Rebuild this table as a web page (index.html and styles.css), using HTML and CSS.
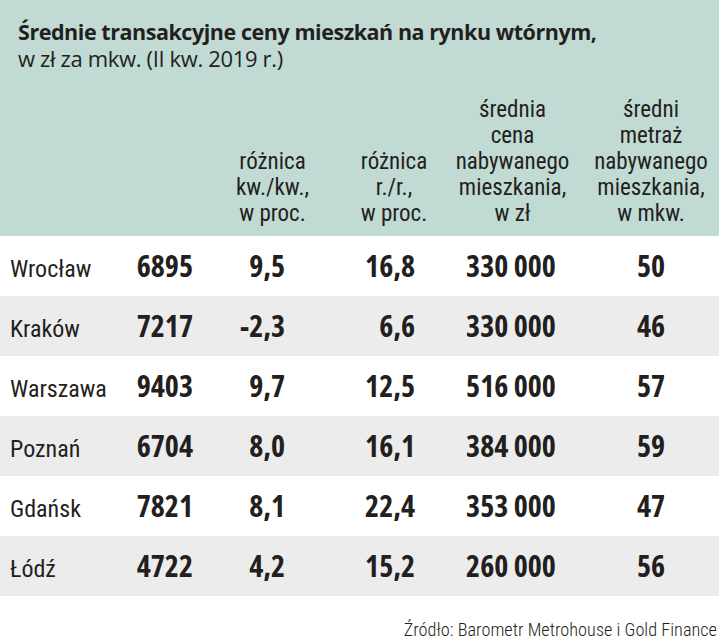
FILE: index.html
```html
<!DOCTYPE html>
<html lang="pl">
<head>
<meta charset="utf-8">
<title>Średnie transakcyjne ceny mieszkań</title>
<link rel="stylesheet" href="styles.css">
</head>
<body>
<div class="chart">
  <header class="head">
    <h1 class="title">Średnie transakcyjne ceny mieszkań na rynku wtórnym,</h1>
    <p class="subtitle">w zł za mkw. (II kw. 2019 r.)</p>
    <div class="grid colhead">
      <div class="c1"></div>
      <div class="c2"></div>
      <div class="c3">różnica<br>kw./kw.,<br>w proc.</div>
      <div class="c4">różnica<br>r./r.,<br>w proc.</div>
      <div class="c5">średnia<br>cena<br>nabywanego<br>mieszkania,<br>w zł</div>
      <div class="c6">średni<br>metraż<br>nabywanego<br>mieszkania,<br>w mkw.</div>
    </div>
  </header>
  <div class="rows">
    <div class="grid row"><div class="c1 city">Wrocław</div><div class="c2 num">6895</div><div class="c3 num">9,5</div><div class="c4 num">16,8</div><div class="c5 num">330 000</div><div class="c6 num">50</div></div>
    <div class="grid row alt"><div class="c1 city">Kraków</div><div class="c2 num">7217</div><div class="c3 num">-2,3</div><div class="c4 num">6,6</div><div class="c5 num">330 000</div><div class="c6 num">46</div></div>
    <div class="grid row"><div class="c1 city">Warszawa</div><div class="c2 num">9403</div><div class="c3 num">9,7</div><div class="c4 num">12,5</div><div class="c5 num">516 000</div><div class="c6 num">57</div></div>
    <div class="grid row alt"><div class="c1 city">Poznań</div><div class="c2 num">6704</div><div class="c3 num">8,0</div><div class="c4 num">16,1</div><div class="c5 num">384 000</div><div class="c6 num">59</div></div>
    <div class="grid row"><div class="c1 city">Gdańsk</div><div class="c2 num">7821</div><div class="c3 num">8,1</div><div class="c4 num">22,4</div><div class="c5 num">353 000</div><div class="c6 num">47</div></div>
    <div class="grid row alt"><div class="c1 city">Łódź</div><div class="c2 num">4722</div><div class="c3 num">4,2</div><div class="c4 num">15,2</div><div class="c5 num">260 000</div><div class="c6 num">56</div></div>
  </div>
  <p class="source">Źródło: Barometr Metrohouse i Gold Finance</p>
</div>
</body>
</html>
```
FILE: styles.css
```css
html, body {
  margin: 0;
  padding: 0;
  background: #ffffff;
}

.chart {
  width: 719px;
  color: #231f20;
  font-family: "Open Sans", "Noto Sans", sans-serif;
}

.head {
  background: #c1dad4;
  padding: 18px 0 9px 0;
}

.title {
  margin: 0;
  padding-left: 18px;
  font-size: 21.5px;
  line-height: 28px;
  font-weight: 700;
  letter-spacing: -0.45px;
  white-space: nowrap;
}

.subtitle {
  margin: 0;
  padding-left: 18px;
  font-size: 22px;
  line-height: 24px;
  font-weight: 400;
  letter-spacing: -0.35px;
}

.grid {
  display: grid;
  grid-template-columns: 125px 80px 135px 108px 135px 136px;
}

.colhead {
  margin-top: 27px;
  align-items: end;
  font-family: "Roboto Condensed", "Open Sans", sans-serif;
  font-size: 23px;
  line-height: 26px;
  text-align: center;
}

.colhead .c5 {
  padding-right: 6px;
}

.row {
  height: 60px;
  align-items: stretch;
}

.row > div {
  line-height: 60px;
}

.row.alt {
  background: #ececec;
}

.row .city {
  padding-left: 10px;
  padding-top: 6px;
  line-height: 54px;
  font-family: "Roboto Condensed", "Open Sans", sans-serif;
  font-size: 24px;
  font-weight: 400;
}

.num {
  font-size: 30px;
  font-weight: 700;
  font-stretch: 75%;
}

.row .c2 {
  text-align: right;
  padding-right: 12px;
}

.row .c3 {
  text-align: right;
  padding-right: 55px;
}

.row .c4 {
  text-align: right;
  padding-right: 33px;
}

.row .c5 {
  text-align: center;
  padding-right: 9px;
}

.row .c6 {
  text-align: center;
}

.source {
  margin: 24px 0 0 0;
  padding-right: 2px;
  text-align: right;
  font-family: "Roboto Condensed", "Open Sans", sans-serif;
  font-size: 18.3px;
  line-height: 20px;
  font-weight: 300;
  white-space: nowrap;
}
```
